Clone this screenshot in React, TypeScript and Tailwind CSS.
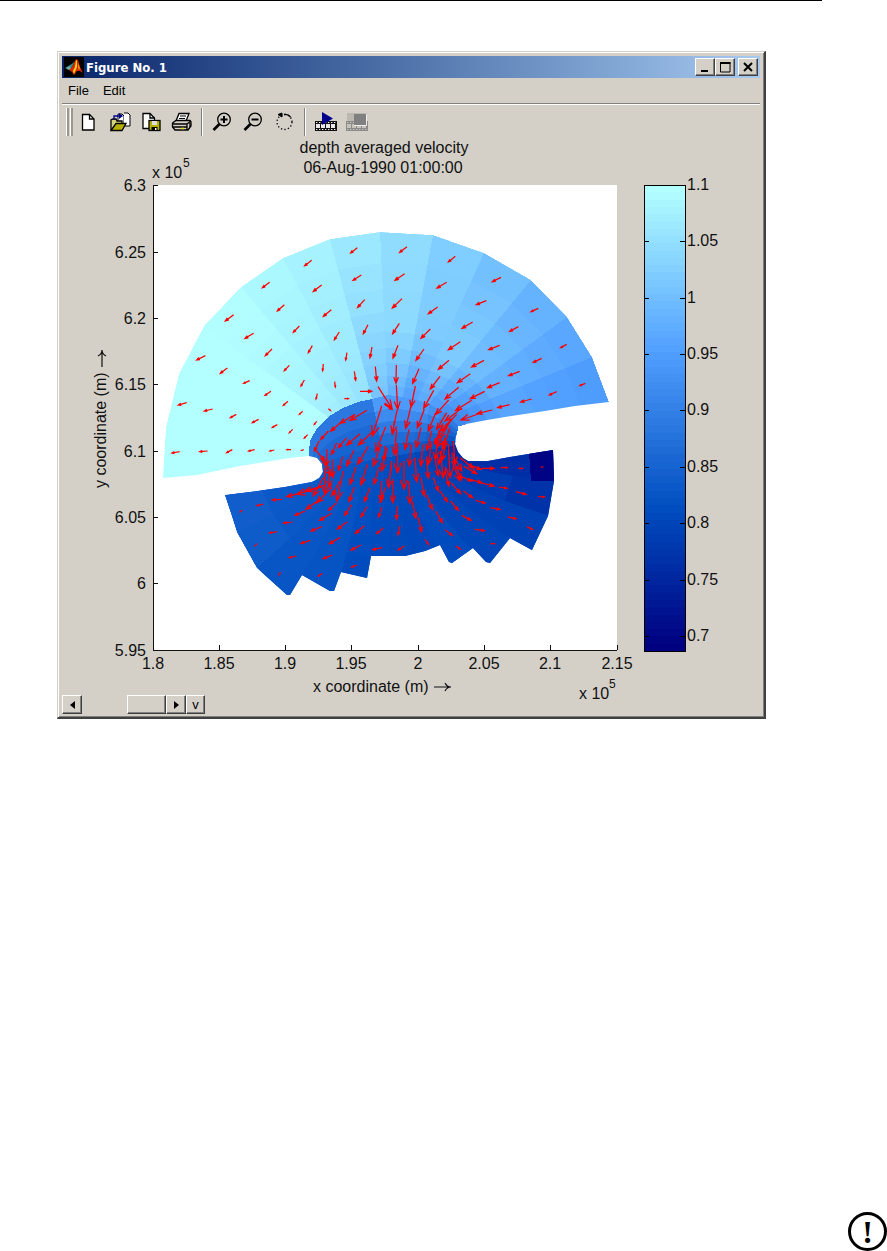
import React from "react";

type Point = [number, number];
type Arrow = [number, number, number, number];

const STOPS: [number, number[]][] = [
  [0.685, [0, 0, 128]],
  [0.81, [0, 77, 191]],
  [0.955, [82, 160, 255]],
  [1.1, [179, 255, 255]],
];

function colour(value: number): string {
  const v = Math.max(0.685, Math.min(1.1, value));
  let k = 0;
  while (k < STOPS.length - 2 && v > STOPS[k + 1][0]) k++;
  const [a, ca] = STOPS[k];
  const [b, cb] = STOPS[k + 1];
  const t = (v - a) / (b - a);
  return `rgb(${ca.map((c, i) => Math.round(c + (cb[i] - c) * t)).join(",")})`;
}

const lerp = (a: Point, b: Point, t: number): Point => [a[0] + (b[0] - a[0]) * t, a[1] + (b[1] - a[1]) * t];

// Outer ends of the grid lines on the sea side, from west to east.
const OUTER: Point[] = [
  [162, 484], [166, 426], [179, 373], [204, 325], [241, 286], [283, 257], [330, 238],
  [380, 231], [433, 234], [484, 252], [531, 279], [567, 316], [592, 356], [610, 404],
];
// Where the same lines reach the shallow bar.
const INNER: Point[] = [
  [308, 460], [310, 440], [317, 427], [328, 416], [343, 407], [358, 401], [372, 398],
  [388, 394], [403, 396], [417, 399], [429, 403], [440, 409], [449, 415], [458, 425],
];
// Landward ends of the grid lines.
const LAND: Point[] = [
  [225, 494], [237, 531], [257, 567], [288, 596], [334, 596], [368, 590], [395, 572],
  [418, 572], [452, 566], [490, 566], [533, 551], [549, 515], [555, 480], [554, 449],
];
const WEST: Point = [322, 468];
const EAST: Point = [456, 444];
const THROAT: Point[] = LAND.map((_, j) => lerp(WEST, EAST, j / 13));
const BEND: Point[] = THROAT.map(([x, y], j) => {
  const middle = Math.sin((j / 13) * Math.PI);
  return [x - 8 + (j / 13) * 16, y + 16 + middle * 40];
});

const OUTLINE =
  "163,477 166,426 179,373 204,325 241,286 283,257 330,238 380,231 433,234 484,252 531,279 567,316 592,356 609,401 " +
  "575,405 545,410 505,416 487,419 466,423 459,429 456,435 455,443 458,451 463,457 468,460 488,460 510,456 553,449 " +
  "554,480 548,515 540,532 532,549 530,548 510,537 490,562 486,561 473,547 452,562 449,561 440,544 425,550 405,555 " +
  "371,555 367,577 341,571 334,590 330,590 302,574 290,594 287,594 257,567 237,531 231,512 225,494 250,491 285,486 " +
  "312,481 319,477 323,471 322,463 317,457 309,455 290,457 240,465 197,474";

const SEA_T = [0, 0.19, 0.35, 0.49, 0.61, 0.71, 0.8, 0.88, 0.94, 1];
const SEA_VALUE = [1.1, 1.1, 1.1, 1.098, 1.089, 1.08, 1.066, 1.046, 1.024, 1.004, 0.984, 0.966, 0.948];
const BAR_T = [0, 0.22, 0.42, 0.61, 0.8, 1];
const LAND_T = [0, 0.11, 0.22, 0.33, 0.45, 0.58, 0.77, 1];

function curve(j: number, t: number): Point {
  return lerp(lerp(THROAT[j], BEND[j], t), lerp(BEND[j], LAND[j], t), t);
}

function seaValue(j: number, k: number): number {
  const base = SEA_VALUE[j];
  if (j < 3) return base;
  if (j < 6) return base - k * 0.003;
  if (j === 6) return base - k * 0.007;
  if (j < 9) return base - (k > 3 ? (k - 3) * 0.013 : k * 0.001);
  return base + Math.min(k, 3) * 0.005 - (k > 4 ? (k - 4) * 0.012 : 0);
}

function buildCells() {
  const cells: { points: Point[]; fill: string }[] = [];
  for (let j = 0; j < 13; j++) {
    for (let k = 0; k < SEA_T.length - 1; k++) {
      const a = SEA_T[k];
      const b = SEA_T[k + 1];
      cells.push({
        points: [
          lerp(OUTER[j], INNER[j], a), lerp(OUTER[j + 1], INNER[j + 1], a),
          lerp(OUTER[j + 1], INNER[j + 1], b), lerp(OUTER[j], INNER[j], b),
        ],
        fill: colour(seaValue(j, k)),
      });
    }
    for (let k = 0; k < BAR_T.length - 1; k++) {
      const a = BAR_T[k];
      const b = BAR_T[k + 1];
      const top = j < 6 ? 0.885 : 0.945 - Math.max(0, j - 9) * 0.018;
      const low = j < 9 ? 0.838 : 0.838 - (j - 8) * 0.009;
      cells.push({
        points: [
          lerp(INNER[j], THROAT[j], a), lerp(INNER[j + 1], THROAT[j + 1], a),
          lerp(INNER[j + 1], THROAT[j + 1], b), lerp(INNER[j], THROAT[j], b),
        ],
        fill: colour(top + ((low - top) * k) / 4),
      });
    }
    for (let k = 0; k < LAND_T.length - 1; k++) {
      const a = LAND_T[k];
      const b = LAND_T[k + 1];
      let value = 0.83 - j * 0.003 - (j > 8 ? (j - 8) * 0.005 : 0);
      if (k === 6 && j < 2) value += 0.008;
      if (j > 3 && j < 8) value -= k * 0.0015;
      if (j === 11 && k === 6) value -= 0.015;
      if (j === 12) value = 0.76;
      cells.push({ points: [curve(j, a), curve(j + 1, a), curve(j + 1, b), curve(j, b)], fill: colour(value) });
    }
  }
  cells.push({ points: [[529, 450], [556, 446], [556, 480], [531, 480]], fill: colour(0.69) });
  return cells;
}

const CELLS = buildCells();

// Velocity vectors, three units to the pixel, grouped by the corner they are measured from.
const FIELD: { origin: Point; arrows: Arrow[] }[] = [
  {
    origin: [155, 220],
    arrows: [
      [607, 80, 587, 96], [619, 162, 594, 178], [629, 236, 608, 259], [639, 311, 625, 338], [651, 378, 645, 410],
      [661, 437, 665, 480], [669, 497, 711, 562], [470, 118, 449, 134], [500, 192, 475, 211], [529, 266, 505, 286],
      [553, 333, 538, 356], [576, 395, 572, 417], [598, 451, 602, 478], [615, 511, 650, 511], [344, 184, 322, 200],
      [388, 251, 367, 270], [433, 315, 415, 334], [472, 374, 460, 395], [505, 429, 503, 449], [539, 482, 541, 498],
      [568, 533, 580, 533], [236, 281, 211, 300], [296, 337, 270, 352], [351, 384, 331, 404], [403, 433, 388, 449],
      [448, 477, 438, 495], [487, 518, 483, 534], [520, 563, 526, 568], [151, 404, 125, 417], [217, 441, 196, 457],
      [284, 479, 266, 487], [348, 511, 330, 523], [399, 541, 385, 553], [443, 571, 433, 580], [95, 545, 70, 552],
      [173, 564, 148, 570], [244, 580, 226, 590],
    ],
  },
  {
    origin: [385, 220],
    arrows: [
      [66, 77, 44, 94], [59, 158, 30, 178], [51, 233, 22, 261], [43, 307, 23, 338], [39, 373, 24, 411],
      [34, 432, 33, 487], [34, 492, 38, 565], [211, 106, 190, 123], [185, 184, 156, 201], [158, 258, 130, 278],
      [136, 324, 108, 352], [117, 384, 93, 418], [102, 443, 83, 487], [91, 495, 78, 558], [348, 169, 322, 182],
      [304, 239, 274, 251], [263, 303, 231, 322], [226, 362, 190, 386], [192, 418, 160, 445], [165, 466, 136, 504],
      [146, 508, 116, 562], [460, 262, 438, 272], [400, 317, 374, 331], [344, 373, 311, 386], [297, 418, 260, 438],
      [256, 458, 217, 485], [221, 499, 180, 534], [191, 537, 152, 580], [545, 370, 527, 380], [470, 412, 445, 424],
      [404, 451, 371, 464], [344, 485, 308, 500], [299, 511, 256, 533], [260, 538, 212, 568], [230, 562, 180, 600],
      [601, 487, 585, 494], [515, 512, 493, 522], [440, 534, 407, 543], [374, 551, 338, 560], [322, 567, 277, 578],
      [297, 573, 228, 597],
    ],
  },
  {
    origin: [155, 380],
    arrows: [
      [311, 115, 292, 125], [367, 131, 352, 139], [413, 145, 403, 155], [458, 161, 448, 171], [485, 121, 478, 130],
      [74, 212, 51, 216], [158, 210, 134, 212], [232, 206, 215, 215], [299, 206, 281, 210], [358, 207, 345, 210],
      [408, 206, 396, 206], [446, 206, 440, 208], [262, 387, 256, 392], [326, 369, 306, 374], [382, 355, 352, 357],
      [445, 334, 395, 347], [500, 318, 425, 340], [510, 312, 450, 330], [306, 488, 301, 494], [366, 452, 344, 456],
      [413, 423, 386, 426], [450, 390, 420, 403], [495, 355, 453, 385], [424, 525, 403, 530], [466, 478, 438, 487],
      [500, 437, 468, 450], [530, 397, 494, 418], [545, 365, 521, 388], [376, 573, 373, 582], [532, 522, 505, 533],
      [555, 470, 523, 488], [577, 422, 547, 444], [590, 371, 569, 403], [598, 318, 582, 362], [502, 577, 490, 585],
      [618, 492, 588, 507], [628, 434, 601, 457], [636, 377, 618, 408], [645, 320, 628, 362], [606, 552, 590, 558],
      [682, 500, 653, 506], [685, 440, 665, 458], [681, 378, 670, 408], [691, 320, 675, 363], [516, 205, 515, 255],
      [532, 235, 533, 290], [520, 255, 525, 320], [510, 260, 510, 340], [545, 185, 530, 220], [563, 227, 550, 268],
      [565, 270, 545, 360], [555, 300, 530, 345], [597, 207, 575, 255], [603, 258, 585, 310], [575, 170, 550, 200],
      [615, 158, 575, 192], [640, 195, 608, 250], [637, 250, 618, 312], [655, 150, 610, 192], [678, 190, 655, 255],
      [672, 258, 657, 310], [697, 200, 680, 270], [710, 250, 700, 320], [692, 137, 662, 212], [680, 75, 652, 165],
      [636, 88, 585, 118], [600, 100, 555, 127], [560, 122, 527, 150], [520, 150, 497, 175], [492, 180, 478, 210],
      [480, 205, 510, 240], [500, 235, 530, 285], [505, 290, 475, 345], [530, 320, 485, 365], [718, 120, 712, 160],
    ],
  },
  {
    origin: [385, 380],
    arrows: [
      [36, 88, 22, 158], [78, 75, 62, 142], [118, 85, 97, 140], [152, 95, 130, 150], [185, 95, 155, 145],
      [215, 100, 165, 150], [35, 145, 28, 222], [72, 145, 60, 205], [108, 140, 93, 200], [140, 150, 125, 208],
      [170, 140, 148, 190], [20, 240, 10, 320], [37, 185, 38, 275], [78, 190, 73, 255], [113, 190, 108, 255],
      [140, 180, 130, 250], [160, 170, 150, 235], [180, 170, 160, 250], [57, 240, 57, 325], [90, 230, 95, 302],
      [125, 235, 130, 292], [150, 235, 160, 285], [165, 210, 175, 290], [185, 180, 170, 240], [190, 190, 195, 290],
      [25, 300, 23, 365], [72, 300, 75, 368], [108, 290, 118, 345], [145, 290, 160, 330], [180, 270, 192, 315],
      [200, 240, 225, 300], [205, 180, 210, 250], [200, 215, 230, 270], [210, 250, 230, 295], [38, 375, 34, 415],
      [82, 362, 93, 412], [125, 342, 142, 385], [165, 330, 187, 362], [198, 305, 227, 338], [225, 285, 260, 300],
      [45, 435, 39, 462], [100, 410, 110, 452], [152, 390, 172, 425], [197, 360, 220, 388], [235, 330, 263, 350],
      [255, 295, 290, 305], [58, 495, 40, 507], [120, 475, 130, 490], [180, 446, 202, 463], [230, 403, 258, 418],
      [272, 358, 300, 366], [285, 305, 327, 315], [212, 495, 225, 504], [270, 445, 298, 449], [316, 380, 344, 385],
      [341, 318, 366, 322], [316, 488, 328, 488], [368, 408, 393, 413], [393, 332, 423, 340], [426, 437, 442, 445],
      [460, 347, 478, 348], [467, 258, 472, 258], [400, 262, 412, 262], [347, 260, 367, 260], [290, 262, 327, 262],
      [250, 250, 288, 265], [235, 255, 275, 278], [225, 230, 265, 262], [0, 195, -4, 240], [205, 110, 155, 175],
      [190, 130, 155, 200], [195, 140, 172, 205], [-10, 300, -12, 362], [-2, 70, 20, 85],
    ],
  },
];

function arrowPath([ox, oy]: Point, [x1, y1, x2, y2]: Arrow): string {
  const ax = ox + x1 / 3;
  const ay = oy + y1 / 3;
  const bx = ox + x2 / 3;
  const by = oy + y2 / 3;
  const dx = (bx - ax) * 0.33;
  const dy = (by - ay) * 0.33;
  const w = 0.38;
  return (
    `M${ax} ${ay}L${bx} ${by}` +
    `M${bx - dx - dy * w} ${by - dy + dx * w}L${bx} ${by}L${bx - dx + dy * w} ${by - dy - dx * w}`
  );
}

const ARROWS = FIELD.flatMap(({ origin, arrows }) => arrows.map((a) => arrowPath(origin, a))).join("");

const X_TICKS: [number, string][] = [
  [153, "1.8"], [219, "1.85"], [285, "1.9"], [351, "1.95"], [418, "2"], [484, "2.05"], [550, "2.1"], [617, "2.15"],
];
const Y_TICKS: [number, string][] = [
  [184, "6.3"], [251, "6.25"], [317, "6.2"], [383, "6.15"], [450, "6.1"], [516, "6.05"], [582, "6"], [649, "5.95"],
];
const BAR_TICKS: [number, string][] = [
  [184, "1.1"], [240, "1.05"], [297, "1"], [353, "0.95"], [409, "0.9"], [466, "0.85"], [522, "0.8"], [579, "0.75"], [635, "0.7"],
];

function LongArrow() {
  return <path d="M0 0H17M11 -4C12 -2 14 0 17 0C14 0 12 2 11 4" fill="none" stroke="#111" strokeWidth="1.2" />;
}

function Chart() {
  return (
    <svg
      viewBox="62 137 698 557"
      className="block w-full overflow-visible fill-[#111] font-['Liberation_Sans',Arial,sans-serif] text-[16px]"
      role="img"
      aria-label="depth averaged velocity"
    >
      <defs>
        <clipPath id="domain">
          <polygon points={OUTLINE} />
        </clipPath>
      </defs>
      <rect x="153" y="184" width="464" height="465" fill="#fff" />
      <g clipPath="url(#domain)" shapeRendering="crispEdges">
        <path d="M322 440H560V600H225V480H322Z" fill={colour(0.81)} />
        {CELLS.map((c, i) => (
          <polygon key={i} points={c.points.map((p) => p.join(",")).join(" ")} fill={c.fill} />
        ))}
      </g>
      <path d={ARROWS} fill="none" stroke="#f00" strokeWidth="1.25" />
      <g stroke="#111" strokeWidth="1" shapeRendering="crispEdges" fill="none">
        <path d="M153 184V649H617" />
        {X_TICKS.map(([x]) => <path key={x} d={`M${x} 649v-5`} />)}
        {Y_TICKS.map(([y]) => <path key={y} d={`M153 ${y}h5`} />)}
      </g>
      {X_TICKS.map(([x, t]) => <text key={t} x={x} y="668" textAnchor="middle">{t}</text>)}
      {Y_TICKS.map(([y, t]) => <text key={t} x="146" y={y + 6} textAnchor="end">{t}</text>)}
      <g shapeRendering="crispEdges">
        {Array.from({ length: 64 }, (_, i) => (
          <rect key={i} x="644" y={184 + i * 7.28} width="41" height="8" fill={colour(1.1 - (i / 63) * 0.415)} />
        ))}
        <rect x="644" y="184" width="41" height="466" fill="none" stroke="#000" />
        {BAR_TICKS.slice(1).map(([y]) => <path key={y} d={`M644 ${y}h5M680 ${y}h5`} stroke="#000" />)}
      </g>
      {BAR_TICKS.map(([y, t]) => <text key={t} x="687" y={y + 5}>{t}</text>)}
      <text x="384" y="152" textAnchor="middle">depth averaged velocity</text>
      <text x="383" y="172" textAnchor="middle">06-Aug-1990 01:00:00</text>
      <text x="152" y="177">x 10</text>
      <text x="183" y="166" className="text-[12px]">5</text>
      <text x="579" y="698">x 10</text>
      <text x="609" y="687" className="text-[12px]">5</text>
      <text x="313" y="691">x coordinate (m)</text>
      <g transform="translate(434 686)"><LongArrow /></g>
      <text transform="translate(106 487) rotate(-90)">y coordinate (m)</text>
      <g transform="translate(102 366) rotate(-90)"><LongArrow /></g>
    </svg>
  );
}

function MatlabLogo() {
  return (
    <svg width="20" height="20" viewBox="0 0 20 20" className="shrink-0" aria-hidden="true">
      <rect width="20" height="20" fill="#000" />
      <path d="M1 11L6 8L9 6L11 4L8 10L5 13Z" fill="#2b8c8c" />
      <path d="M2 11L6 9L7 12L5 13Z" fill="#7aa" />
      <path d="M5 13L8 10L12 2L14 3L16 10L19 16L16 14L13 14L10 18L8 15Z" fill="#d32a00" />
      <path d="M12 3L13 4L13 10L10 17L9 14L11 10Z" fill="#ffd21a" />
      <path d="M14 6L16 11L15 13L14 11Z" fill="#ff8c00" />
    </svg>
  );
}

const BEVEL = "border border-t-white border-l-white border-r-[#404040] border-b-[#404040] shadow-[inset_-1px_-1px_0_#808080]";

function CaptionButton({ label, children }: { label: string; children: React.ReactNode }) {
  return (
    <button aria-label={label} className={`flex h-[18px] w-5 items-center justify-center bg-[#d4d0c8] ${BEVEL}`}>
      <svg width="14" height="14" viewBox="0 0 14 14" fill="none" stroke="#000">{children}</svg>
    </button>
  );
}

function Tool({ label, children }: { label: string; children: React.ReactNode }) {
  return (
    <button aria-label={label} title={label} className="flex h-7 w-[31px] items-center justify-center">
      <svg width="22" height="20" viewBox="0 0 22 20" fill="none" stroke="#000" strokeWidth="1.3">{children}</svg>
    </button>
  );
}

function Divider() {
  return <span className="h-7 w-[2px] border-l border-[#808080] bg-white" />;
}

function Film({ dim }: { dim?: boolean }) {
  const ink = dim ? "#8a8a88" : "#111";
  return (
    <g stroke="none">
      <rect x="0" y="9" width="22" height="10" fill={ink} />
      <g fill={dim ? "#c8c4bc" : "#e8e8e8"}>
        <rect x="1" y="12" width="4" height="4" />
        <rect x="6" y="12" width="4" height="4" />
        <rect x="11" y="12" width="4" height="4" />
        <rect x="16" y="12" width="4" height="4" />
        {[1, 4, 7, 10, 13, 16, 19].map((x) => (
          <g key={x}>
            <rect x={x} y="10" width="1.4" height="1" />
            <rect x={x} y="17" width="1.4" height="1" />
          </g>
        ))}
      </g>
    </g>
  );
}

function Toolbar() {
  return (
    <div role="toolbar" className="flex h-8 items-center pl-1">
      <span className="mr-px h-7 w-[3px] border-l border-white bg-[#9a9890]" />
      <span className="h-7 w-[3px] border-l border-white bg-[#9a9890]" />
      <Tool label="New">
        <path d="M4.500 2.500H11.500L16 7V18H4.500Z" fill="#fff" />
        <path d="M11.500 2.500V7H16" />
      </Tool>
      <Tool label="Open">
        <path d="M9 2H13L15 4V14H9Z" fill="#fff" strokeWidth="1" />
        <path d="M15 1H19L21 3V14H15" fill="#fff" strokeWidth="1" />
        <path d="M2 18V8L4 7H7L8 9H13V12" fill="#d6d27a" />
        <path d="M2 18.500L7 11.500H17L13 18.500Z" fill="#b5b000" />
        <path d="M5 8V4H10" stroke="#00008b" strokeWidth="1.300" />
        <path d="M10 1L14 4L10 7Z" stroke="none" fill="#00008b" />
      </Tool>
      <Tool label="Save">
        <path d="M3 1.500H10L14.500 6V16.500H3Z" fill="#fff" />
        <path d="M10 1.500V6H14.500" />
        <rect x="9" y="8.500" width="11" height="10" fill="#b5b000" />
        <rect x="12" y="9" width="5" height="4" fill="#ddd" stroke="none" />
        <rect x="11.500" y="15" width="6" height="4" fill="#000" stroke="none" />
        <rect x="15" y="16" width="1.500" height="2" fill="#fff" stroke="none" />
      </Tool>
      <Tool label="Print">
        <path d="M5 9L8 1.500H18L15 9Z" fill="#fff" />
        <path d="M9 4H15M8 6.500H14" strokeWidth="1" />
        <path d="M1.500 11L5 8.500H19L20 10V14L17 18H4L1.500 15Z" fill="#d4d0c8" />
        <path d="M1.500 12H16V18M16 12L20 9M2 15H16M19 9V15" />
        <path d="M10 16.500H13" stroke="#e8e000" strokeWidth="1.500" />
      </Tool>
      <span className="w-[4px]" />
      <Divider />
      <span className="w-[3px]" />
      <Tool label="Zoom in">
        <circle cx="13" cy="7.500" r="6.300" />
        <path d="M8.500 12L2.500 18" strokeWidth="2.600" />
        <path d="M9.500 7.500H16.500M13 4V11" strokeWidth="2" />
      </Tool>
      <Tool label="Zoom out">
        <circle cx="13" cy="7.500" r="6.300" />
        <path d="M8.500 12L2.500 18" strokeWidth="2.600" />
        <path d="M9.500 7.500H16.500" strokeWidth="2" />
      </Tool>
      <Tool label="Rotate 3D">
        <circle cx="11.500" cy="10" r="7.500" strokeDasharray="1.300 2.200" />
        <path d="M11 2.500C14 2 16 3 17.500 5" />
        <path d="M5 2.500L9 1V5Z" fill="#000" strokeWidth="1" />
      </Tool>
      <span className="w-[5px]" />
      <Divider />
      <span className="w-[4px]" />
      <Tool label="Play">
        <Film />
        <path d="M7 0L18 6.500L7 13Z" fill="#00008b" stroke="none" />
      </Tool>
      <Tool label="Stop">
        <rect x="1" y="1" width="20" height="10" fill="#bcb8b0" stroke="none" />
        <Film dim />
        <rect x="8" y="2" width="12" height="11" fill="#808080" stroke="none" />
        <path d="M20.500 2V13.500H8" stroke="#eee" strokeWidth="1" />
      </Tool>
    </div>
  );
}

export default function App() {
  return (
    <main className="flex min-h-screen flex-col bg-white text-black">
      <hr className="mr-[65px] h-px border-0 bg-black" />
      <section className="mt-[50px] mr-[121px] ml-[57px] border-t border-r-2 border-b-2 border-l border-t-[#d4d0c8] border-r-[#404040] border-b-[#404040] border-l-[#d4d0c8] bg-[#d4d0c8] font-['Liberation_Sans',Arial,sans-serif] shadow-[inset_1px_1px_0_#fff,inset_-1px_-1px_0_#808080]">
        <div className="px-1 pt-1 pb-[3px]">
          <header className="flex h-[22px] items-center bg-linear-to-r from-[#0a246a] to-[#a6caf0] px-[2px]">
            <MatlabLogo />
            <h1 className="ml-[2px] grow font-['DejaVu_Sans_Condensed','DejaVu_Sans',sans-serif] text-[13px] leading-none font-bold text-white">
              Figure No. 1
            </h1>
            <CaptionButton label="Minimize"><path d="M3 11H10" strokeWidth="2" /></CaptionButton>
            <CaptionButton label="Maximize"><path d="M2.500 2.500H12V12H2.500Z" /><path d="M2 3H12.500" strokeWidth="2" /></CaptionButton>
            <span className="w-[3px]" />
            <CaptionButton label="Close"><path d="M3 3L11 11M11 3L3 11" strokeWidth="2" /></CaptionButton>
          </header>
          <nav className="flex h-[26px] items-center gap-[14px] border-b border-[#808080] pl-[6px] text-[13px] shadow-[0_1px_0_#fff]">
            <button>File</button>
            <button>Edit</button>
          </nav>
          <div className="pt-[2px]"><Toolbar /></div>
          <Chart />
          <footer className="relative flex h-[19px]">
            <button aria-label="Previous time step" className={`flex w-5 items-center justify-center ${BEVEL}`}>
              <svg width="5" height="8" viewBox="0 0 5 8"><path d="M5 0V8L0 4Z" /></svg>
            </button>
            <input
              type="range"
              aria-label="Time step"
              min="0"
              max="100"
              defaultValue="100"
              className="m-0 h-[19px] w-[84px] appearance-none bg-transparent [&::-webkit-slider-thumb]:h-[19px] [&::-webkit-slider-thumb]:w-[39px] [&::-webkit-slider-thumb]:appearance-none [&::-webkit-slider-thumb]:border [&::-webkit-slider-thumb]:border-t-white [&::-webkit-slider-thumb]:border-r-[#404040] [&::-webkit-slider-thumb]:border-b-[#404040] [&::-webkit-slider-thumb]:border-l-white [&::-webkit-slider-thumb]:bg-[#d4d0c8] [&::-webkit-slider-thumb]:shadow-[inset_-1px_-1px_0_#808080]"
            />
            <button aria-label="Next time step" className={`flex w-5 items-center justify-center ${BEVEL}`}>
              <svg width="5" height="8" viewBox="0 0 5 8"><path d="M0 0V8L5 4Z" /></svg>
            </button>
            <button className={`flex w-[19px] items-center justify-center text-[13px] leading-none ${BEVEL}`}>v</button>
          </footer>
        </div>
      </section>
      <aside className="mt-auto flex justify-end">
        <span className="flex size-[39px] items-center justify-center rounded-full border-[3px] border-black font-['Liberation_Serif',serif] text-[32px] leading-none font-bold">
          !
        </span>
      </aside>
    </main>
  );
}
